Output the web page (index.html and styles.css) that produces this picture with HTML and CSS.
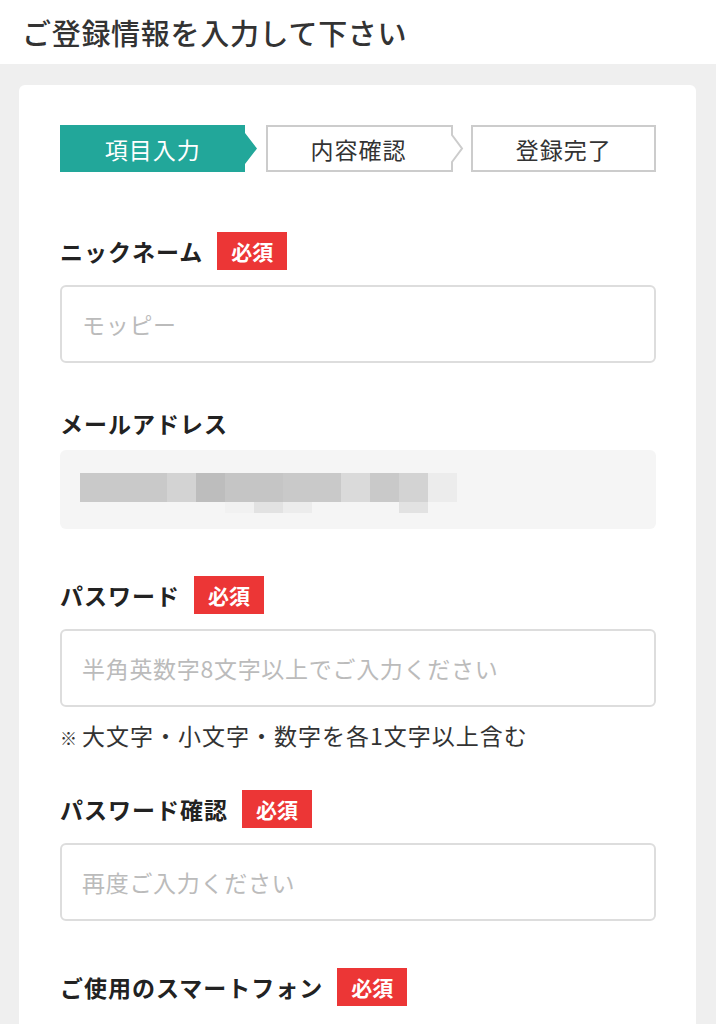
FILE: index.html
```html
<!DOCTYPE html>
<html lang="ja">
<head>
    <meta charset="UTF-8">
    <meta name="viewport" content="width=device-width, initial-scale=1.0">
    <title>ご登録情報</title>
    <link rel="stylesheet" href="styles.css">
</head>
<body>
    <div class="pageHeader">
        <h1 class="pageTitle">ご登録情報を入力して下さい</h1>
    </div>
    <div class="wrap">
        <div class="card">
            <div class="steps">
                <div class="step stepNow">
                    <svg class="stepShape" width="198" height="47" viewBox="0 0 198 47">
                        <polygon points="0,0 185,0 185,8 197,23.5 185,39 185,47 0,47" fill="#22a79a"/>
                    </svg>
                    <span class="stepText">項目入力</span>
                </div>
                <div class="step">
                    <svg class="stepShape" width="198" height="47" viewBox="0 0 198 47">
                        <polygon points="1,1 186,1 186,10 196,23.5 186,37 186,46 1,46" fill="#fff" stroke="#cccccc" stroke-width="2"/>
                    </svg>
                    <span class="stepText">内容確認</span>
                </div>
                <div class="step stepBox">
                    <span class="stepText">登録完了</span>
                </div>
            </div>

            <div class="field fieldFirst">
                <div class="label">ニックネーム<span class="must">必須</span></div>
                <input class="inputBox" type="text" placeholder="モッピー">
            </div>

            <div class="field fieldNear">
                <div class="label labelTight">メールアドレス</div>
                <div class="fixedBox">
                    <!-- ぼかし表示 -->
                    <div class="mosaic">
                        <div class="mRow">
                            <i class="s3"></i><i class="s3"></i><i class="s3"></i><i class="s4"></i><i class="s1"></i><i class="s2"></i><i class="s2"></i><i class="s3"></i><i class="s3"></i><i class="s5"></i><i class="s3"></i><i class="s4"></i><i class="s7"></i>
                        </div>
                        <div class="mRow mRowLow">
                            <i></i><i></i><i></i><i></i><i></i><i class="s8"></i><i class="s6"></i><i class="s7"></i><i></i><i></i><i></i><i class="s6"></i><i></i>
                        </div>
                    </div>
                </div>
            </div>

            <div class="field">
                <div class="label">パスワード<span class="must">必須</span></div>
                <input class="inputBox" type="password" placeholder="半角英数字8文字以上でご入力ください">
                <p class="note"><span class="mark">※</span>大文字・小文字・数字を各1文字以上含む</p>
            </div>

            <div class="field fieldAfterNote">
                <div class="label">パスワード確認<span class="must">必須</span></div>
                <input class="inputBox" type="password" placeholder="再度ご入力ください">
            </div>

            <div class="field">
                <div class="label">ご使用のスマートフォン<span class="must">必須</span></div>
            </div>
        </div>
    </div>
</body>
</html>
```
FILE: styles.css
```css
html,body{
    margin: 0px;
    padding: 0px;
    background-color: #efefef;
    font-family: "Noto Sans CJK JP", "Noto Sans", sans-serif;
    color: #222;
}
.pageHeader{
    height: 64px;
    background-color: #fff;
    padding-left: 22px;
    display: flex;
    align-items: center;
}
.pageTitle{
    margin: 0px;
    font-size: 29px;
    font-weight: 500;
    color: #333;
    letter-spacing: 0.7px;
}
.wrap{
    padding: 21px 20px 0px 19px;
}
.card{
    background-color: #fff;
    border-radius: 6px 6px 0px 0px;
    padding: 40px 40px 80px 41px;
}
.steps{
    display: flex;
    flex-direction: row;
    gap: 20px;
}
.step{
    position: relative;
    width: 186px;
    height: 47px;
    display: flex;
    justify-content: center;
    align-items: center;
}
.stepShape{
    position: absolute;
    left: 0px;
    top: 0px;
    overflow: visible;
}
.stepText{
    position: relative;
    font-size: 23px;
    letter-spacing: 1px;
    color: #333;
}
.stepNow .stepText{
    color: #fff;
}
.stepBox{
    box-sizing: border-box;
    width: 185px;
    border: 2px solid #cccccc;
}
.field{
    margin-top: 47px;
    display: flex;
    flex-direction: column;
}
.fieldFirst{
    margin-top: 60px;
}
.fieldNear{
    margin-top: 41px;
}
.fieldAfterNote{
    margin-top: 38px;
}
.label{
    height: 38px;
    display: flex;
    align-items: center;
    font-size: 23px;
    font-weight: bold;
    letter-spacing: 1px;
    margin-bottom: 15px;
}
.labelTight{
    margin-bottom: 8px;
}
.must{
    margin-left: 14px;
    width: 70px;
    height: 38px;
    display: flex;
    justify-content: center;
    align-items: center;
    background-color: #ec3636;
    color: #fff;
    font-size: 21px;
    letter-spacing: 0px;
}
.inputBox{
    box-sizing: border-box;
    width: 100%;
    height: 78px;
    margin: 0px;
    border: 2px solid #dddddd;
    border-radius: 6px;
    padding: 0px 20px;
    font-family: "Noto Sans CJK JP", "Noto Sans", sans-serif;
    font-size: 23px;
    letter-spacing: 0.7px;
    color: #333;
    background-color: #fff;
    outline: none;
}
.inputBox::placeholder{
    color: #bbbbbb;
}
.fixedBox{
    height: 79px;
    border-radius: 6px;
    background-color: #f5f5f5;
    padding: 23px 0px 0px 20px;
    box-sizing: border-box;
}
.mosaic{
    display: flex;
    flex-direction: column;
    filter: blur(0.6px);
}
.mRow{
    display: flex;
    flex-direction: row;
}
.mRow i{
    display: block;
    width: 29px;
    height: 29px;
}
.mRowLow i{
    height: 11px;
}
.s1{ background-color: #bdbdbd; }
.s2{ background-color: #c5c5c5; }
.s3{ background-color: #c9c9c9; }
.s4{ background-color: #d3d3d3; }
.s5{ background-color: #dadada; }
.s6{ background-color: #e2e2e2; }
.s7{ background-color: #ececec; }
.s8{ background-color: #f1f1f1; }
.note{
    margin: 14px 0px 0px 0px;
    line-height: 28px;
    font-size: 23px;
    color: #333;
    letter-spacing: 1px;
}
.mark{
    font-size: 17px;
    margin-right: 4px;
}
```
